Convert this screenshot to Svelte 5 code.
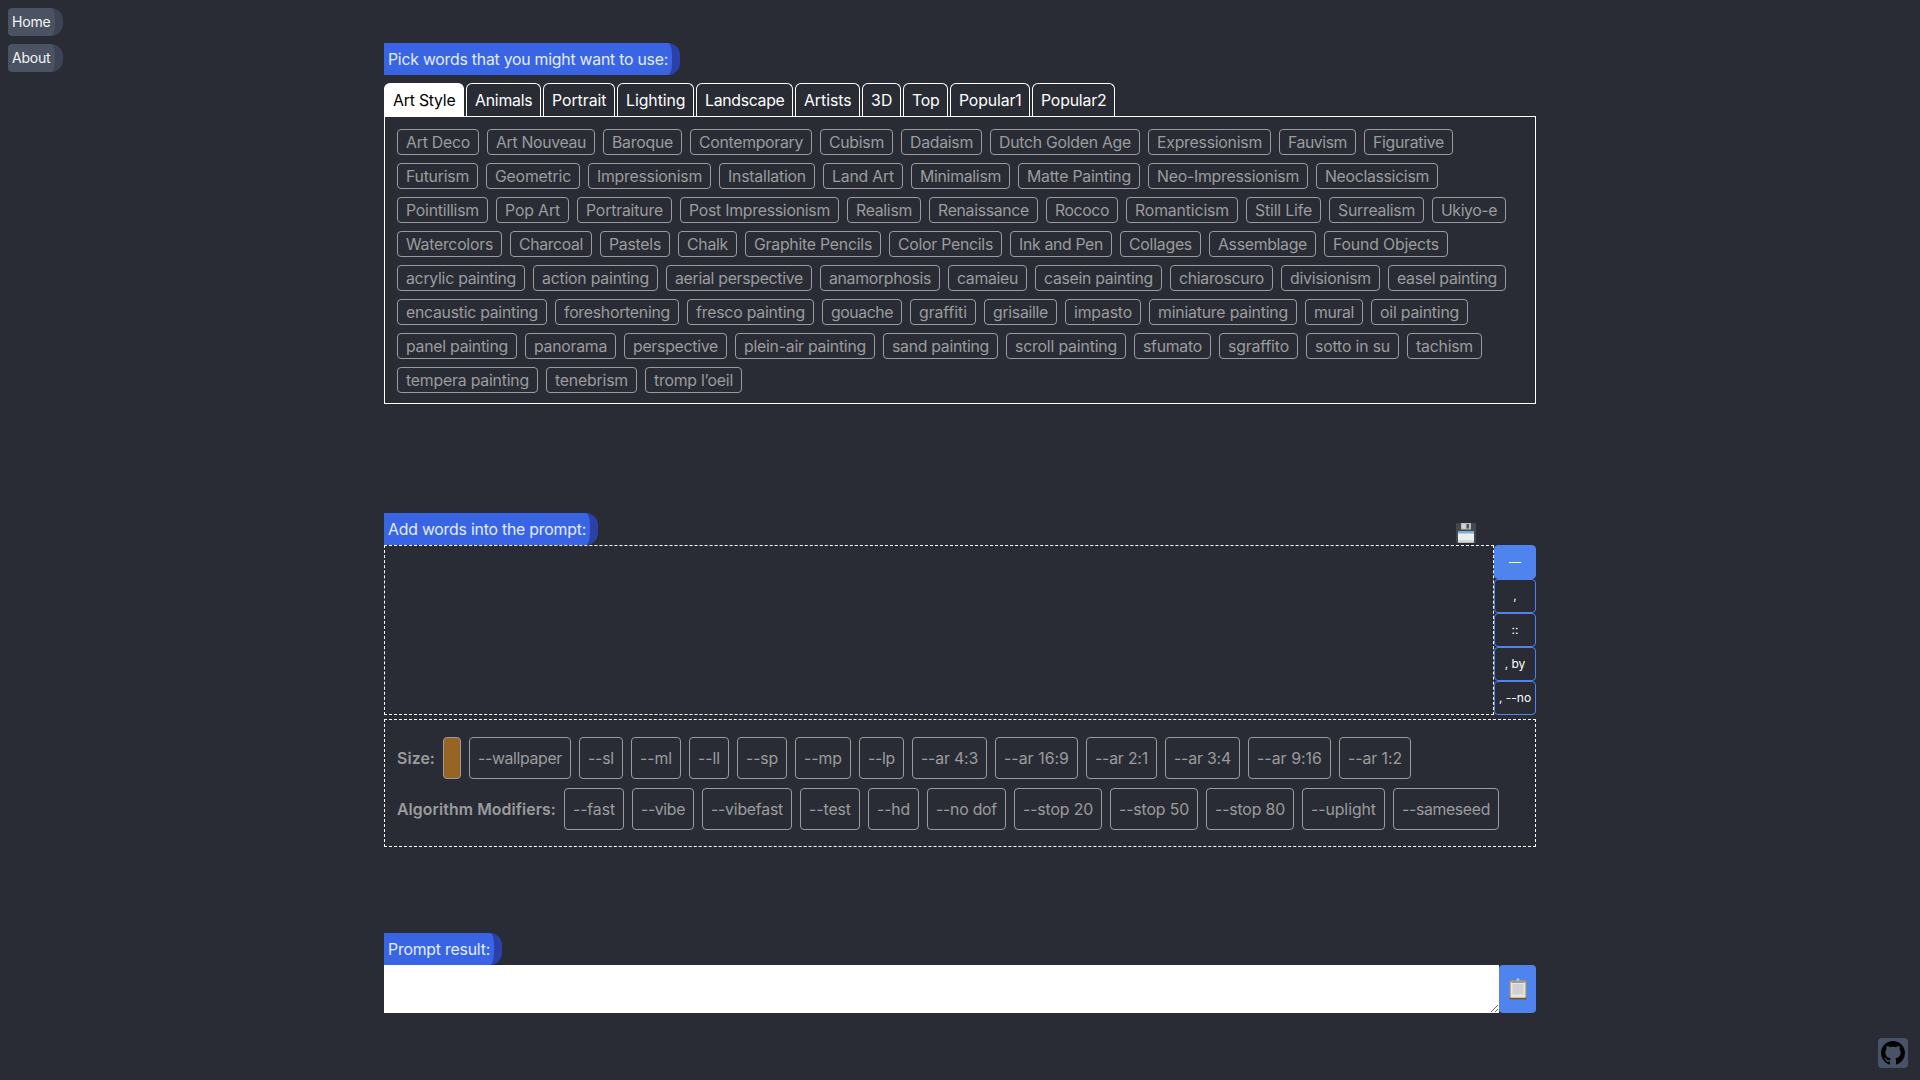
<script>
  const tabs = [
    ['Art Style', 80], ['Animals', 75], ['Portrait', 72], ['Lighting', 77], ['Landscape', 97],
    ['Artists', 65], ['3D', 39], ['Top', 45], ['Popular1', 80], ['Popular2', 83],
  ];

  const words = [
    [['Art Deco', 82], ['Art Nouveau', 108], ['Baroque', 79], ['Contemporary', 122], ['Cubism', 73], ['Dadaism', 81], ['Dutch Golden Age', 150], ['Expressionism', 123], ['Fauvism', 77], ['Figurative', 89]],
    [['Futurism', 81], ['Geometric', 94], ['Impressionism', 123], ['Installation', 96], ['Land Art', 80], ['Minimalism', 99], ['Matte Painting', 122], ['Neo-Impressionism', 160], ['Neoclassicism', 122]],
    [['Pointillism', 91], ['Pop Art', 73], ['Portraiture', 95], ['Post Impressionism', 159], ['Realism', 74], ['Renaissance', 109], ['Rococo', 72], ['Romanticism', 112], ['Still Life', 75], ['Surrealism', 95], ['Ukiyo-e', 74]],
    [['Watercolors', 105], ['Charcoal', 82], ['Pastels', 70], ['Chalk', 59], ['Graphite Pencils', 136], ['Color Pencils', 113], ['Ink and Pen', 102], ['Collages', 81], ['Assemblage', 107], ['Found Objects', 124]],
    [['acrylic painting', 128], ['action painting', 125], ['aerial perspective', 146], ['anamorphosis', 120], ['camaieu', 79], ['casein painting', 127], ['chiaroscuro', 103], ['divisionism', 99], ['easel painting', 118]],
    [['encaustic painting', 150], ['foreshortening', 124], ['fresco painting', 127], ['gouache', 80], ['graffiti', 66], ['grisaille', 73], ['impasto', 76], ['miniature painting', 148], ['mural', 58], ['oil painting', 97]],
    [['panel painting', 120], ['panorama', 91], ['perspective', 103], ['plein-air painting', 140], ['sand painting', 115], ['scroll painting', 120], ['sfumato', 77], ['sgraffito', 79], ['sotto in su', 93], ['tachism', 75]],
    [['tempera painting', 141], ['tenebrism', 91], ['tromp l’oeil', 97]],
  ];

  const modifiers = [
    {
      title: 'Size:', width: 38,
      items: [['', 18], ['--wallpaper', 102], ['--sl', 44], ['--ml', 50], ['--ll', 40], ['--sp', 50], ['--mp', 56], ['--lp', 45], ['--ar 4:3', 75], ['--ar 16:9', 83], ['--ar 2:1', 71], ['--ar 3:4', 75], ['--ar 9:16', 83], ['--ar 1:2', 72]],
    },
    {
      title: 'Algorithm Modifiers:', width: 159,
      items: [['--fast', 60], ['--vibe', 62], ['--vibefast', 90], ['--test', 60], ['--hd', 51], ['--no dof', 79], ['--stop 20', 88], ['--stop 50', 88], ['--stop 80', 88], ['--uplight', 83], ['--sameseed', 106]],
    },
  ];

  const joiners = ['—', ',', '::', ', by', ', --no'];

  // Spreads the text's tracking so that it fills the given width.
  function fit(node, width) {
    const natural = node.getBoundingClientRect().width;
    const count = node.textContent.length;
    if (count > 0) node.style.letterSpacing = `${(width - natural) / count}px`;
  }
</script>

<div class="page">
  <nav>
    <a class="link" href="#home"><span use:fit={38.5}>Home</span></a>
    <a class="link" href="#about"><span use:fit={38.5}>About</span></a>
  </nav>

  <main>
    <section class="pick">
      <h2 class="label"><span use:fit={280}>Pick words that you might want to use:</span></h2>
      <div class="tabs">
        {#each tabs as [name, width], i}
          <button class="tab" class:active={i === 0} style:width="{width}px"><span use:fit={width - 17.5}>{name}</span></button>
        {/each}
      </div>
      <div class="panel">
        {#each words as row}
          <div class="row">
            {#each row as [name, width]}
              <button class="chip" style:width="{width}px"><span use:fit={width - 18}>{name}</span></button>
            {/each}
          </div>
        {/each}
      </div>
    </section>

    <section class="compose">
      <div class="heading">
        <h2 class="label"><span use:fit={198}>Add words into the prompt:</span></h2>
        <button class="save" aria-label="Save">
          <svg width="20" height="20" viewBox="0 0 20 20">
            <path d="M0 0h19l1 1v19H1l-1-1z" fill="#44474c" />
            <rect x="5" y="0" width="10" height="6.5" fill="#b9bbbe" />
            <rect x="10.5" y="1" width="2.5" height="4.5" fill="#55585d" />
            <rect x="6" y="1" width="3.5" height="4.5" fill="#d2d3d5" />
            <rect x="2" y="8.5" width="16" height="11" fill="#eceded" />
            <rect x="2" y="8.5" width="16" height="2" fill="#75b4e8" />
            <rect x="2" y="17" width="16" height="2.5" fill="#d6d7d8" />
          </svg>
        </button>
      </div>
      <div class="prompt">
        <div class="drop"></div>
        <div class="joiners">
          {#each joiners as text, i}
            <button class="joiner" class:filled={i === 0}>{text}</button>
          {/each}
        </div>
      </div>
      <div class="mods">
        {#each modifiers as group}
          <div class="row">
            <strong class="title" style:width="{group.width}px"><span use:fit={group.width}>{group.title}</span></strong>
            {#each group.items as [name, width]}
              <button class="chip tall" class:picked={name === ''} style:width="{width}px"><span use:fit={width - 18}>{name}</span></button>
            {/each}
          </div>
        {/each}
      </div>
    </section>

    <section class="result">
      <h2 class="label"><span use:fit={102}>Prompt result:</span></h2>
      <div class="output">
        <textarea aria-label="Prompt result"></textarea>
        <button class="copy" aria-label="Copy">
          <svg width="18" height="22" viewBox="0 0 18 22">
            <rect x="0.5" y="2" width="17" height="19.5" rx="0.8" fill="#a98d5c" />
            <rect x="0.5" y="19.8" width="17" height="1.7" fill="#6d5633" />
            <rect x="1.6" y="4" width="14.8" height="15.6" fill="#e4e4e4" />
            <rect x="3.5" y="6" width="11" height="10.5" fill="#d1d1d2" />
            <path d="M2.5 2.5h4.8a1.8 1.8 0 0 1 3.4 0h4.8v2.6h-13z" fill="#9b9da3" />
            <circle cx="9" cy="1.7" r="1.4" fill="#a9c3ee" />
          </svg>
        </button>
      </div>
    </section>
  </main>

  <aside>
    <a class="github" href="#github" aria-label="GitHub">
      <svg width="24" height="24" viewBox="0 0 16 16">
        <path d="M8 0C3.58 0 0 3.58 0 8c0 3.54 2.29 6.53 5.47 7.59.4.07.55-.17.55-.38 0-.19-.01-.82-.01-1.49-2.01.37-2.53-.49-2.69-.94-.09-.23-.48-.94-.82-1.13-.28-.15-.68-.52-.01-.53.63-.01 1.08.58 1.23.82.72 1.21 1.87.87 2.33.66.07-.52.28-.87.51-1.07-1.78-.2-3.64-.89-3.64-3.95 0-.87.31-1.59.82-2.15-.08-.2-.36-1.02.08-2.12 0 0 .67-.21 2.2.82.64-.18 1.32-.27 2-.27s1.36.09 2 .27c1.53-1.04 2.2-.82 2.2-.82.44 1.1.16 1.92.08 2.12.51.56.82 1.27.82 2.15 0 3.07-1.87 3.75-3.65 3.95.29.25.54.73.54 1.48 0 1.07-.01 1.93-.01 2.2 0 .21.15.46.55.38A8.01 8.01 0 0 0 16 8c0-4.42-3.58-8-8-8z" />
      </svg>
    </a>
  </aside>
</div>

<style>
  :global(body) {
    background: #292c34;
  }
  .page {
    box-sizing: border-box;
    display: grid;
    grid-template-columns: 384px 1152px 384px;
    height: 1080px;
    overflow: hidden;
    background: #292c34;
    color: #fff;
    font: 15.8px/24px Inter, sans-serif;
  }
  .page * {
    box-sizing: border-box;
  }
  button {
    font: inherit;
    color: inherit;
    background: none;
    border: 0;
    margin: 0;
    padding: 0;
  }
  span {
    display: inline-block;
    white-space: pre;
  }
  svg {
    display: block;
  }
  nav {
    display: flex;
    flex-direction: column;
    align-items: flex-start;
    gap: 8px;
    padding: 8px;
  }
  .link {
    height: 28px;
    padding: 2px 4px;
    border-right: 8px solid #3d4354;
    border-radius: 4px 12px 12px 4px;
    background: #4b5362;
    color: #f3f4f6;
    font-size: 14px;
    text-decoration: none;
    width: 55px;
  }
  main {
    display: flex;
    flex-direction: column;
    padding-top: 43px;
  }
  .label {
    margin: 0;
    width: fit-content;
    height: 32px;
    padding: 5px 4px 3px;
    border-right: 8px solid #2b41a8;
    border-radius: 0 12px 12px 0;
    background: #3964e4;
    color: #e3ecff;
    font-size: inherit;
    font-weight: 400;
  }
  .pick {
    height: 470px;
  }
  .tabs {
    display: flex;
    gap: 2px;
    margin-top: 8px;
    height: 33px;
  }
  .tab {
    flex: none;
    border: 1px solid #fff;
    border-bottom: 0;
    border-radius: 6px 6px 0 0;
    text-align: left;
    padding: 2px 8px 0;
    white-space: nowrap;
  }
  .tab.active {
    background: #fff;
    color: #000;
  }
  .panel {
    display: flex;
    flex-direction: column;
    gap: 8px;
    height: 288px;
    padding: 12px;
    border: 1px solid #fff;
  }
  .row {
    display: flex;
    gap: 8px;
    color: #9b9c9e;
  }
  .chip {
    flex: none;
    height: 26px;
    padding: 1px 8px 0;
    border: 1px solid #9b9c9e;
    border-radius: 4px;
    line-height: 23px;
    text-align: left;
    white-space: nowrap;
  }
  .chip.tall {
    height: 42px;
    padding-top: 2px;
    line-height: 24px;
  }
  .chip.picked {
    background: #966423;
  }
  .compose {
    height: 420px;
  }
  .heading {
    display: flex;
    justify-content: space-between;
    align-items: flex-start;
    padding-right: 60px;
  }
  .save {
    padding-top: 10px;
    width: 20px;
  }
  .prompt {
    display: flex;
    height: 170px;
  }
  .drop {
    flex: 1;
    border: 1px dashed #fff;
  }
  .joiners {
    display: flex;
    flex-direction: column;
    width: 42px;
  }
  .joiner {
    height: 34px;
    border: 1px solid #4f83ee;
    border-radius: 4px;
    font-size: 12px;
    white-space: nowrap;
  }
  .joiner.filled {
    background: #4f83ee;
  }
  .mods {
    display: flex;
    flex-direction: column;
    gap: 9px;
    height: 128px;
    margin-top: 4px;
    padding: 17px 12px;
    border: 1px dashed #fff;
  }
  .title {
    flex: none;
    line-height: 44px;
    height: 42px;
    font-weight: 600;
    white-space: nowrap;
  }
  .output {
    display: flex;
    height: 48px;
  }
  textarea {
    flex: 1;
    border: 0;
    margin: 0;
    background: #fff;
    outline: none;
  }
  .copy {
    display: flex;
    justify-content: center;
    align-items: center;
    width: 37px;
    border-radius: 4px;
    background: #4f83ee;
  }
  aside {
    display: flex;
    justify-content: flex-end;
    align-items: flex-end;
    padding: 12px;
  }
  .github {
    padding: 3px;
    border-radius: 4px;
    background: #485368;
  }
</style>
